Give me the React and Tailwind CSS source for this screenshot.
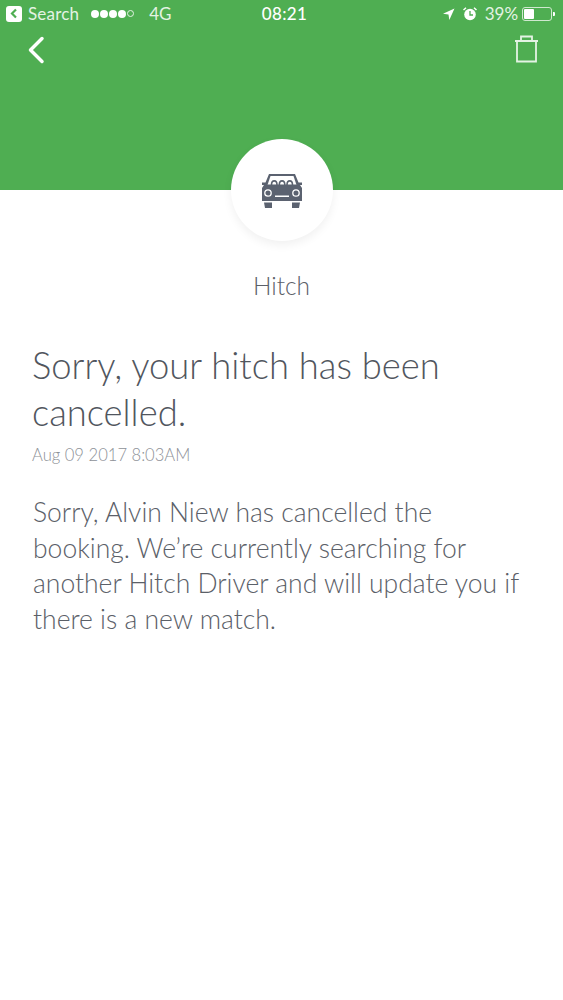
import React from 'react';

const font = { fontFamily: 'Lato, sans-serif' };

function CarIcon() {
  return (
    <svg width="40" height="34" viewBox="0 0 40 34" className="mt-[2px]">
      <path fill="#5b6270" d="M7 0h26l3.500 8.500H40v2.500h-2l2 3v13H0V14l2-3H0V8.500h3.500z" />
      <path fill="#fff" d="M8.500 2h23l3 9h-29z" />
      <path fill="none" stroke="#5b6270" strokeWidth="1.600" d="M9.500 11c0-5.500 5.500-5.500 5.500 0M17.300 11c0-5.500 5.500-5.500 5.500 0M25 11c0-5.500 5.500-5.500 5.500 0" />
      <rect x="5" y="10.500" width="30" height="2" fill="#5b6270" />
      <circle cx="6" cy="19" r="3.200" fill="none" stroke="#fff" strokeWidth="1.300" />
      <circle cx="34" cy="19" r="3.200" fill="none" stroke="#fff" strokeWidth="1.300" />
      <rect x="13" y="21.500" width="14" height="1.500" fill="#fff" />
      <path fill="#5b6270" d="M2 28.500h8V34H3zM30 28.500h8l-1 5.500h-7z" />
    </svg>
  );
}

function StatusBar() {
  return (
    <div className="flex items-center h-[27px] pl-[6px] pr-[8px] text-[#e4f3e4] text-[17px]" style={font}>
      <div className="flex flex-1 items-center">
        <span className="flex items-center justify-center w-[16px] h-[16px] bg-white rounded-[3px]">
          <svg width="10" height="11" viewBox="0 0 10 11">
            <path d="M7 1.500 3 5.500l4 4" fill="none" stroke="#4fae52" strokeWidth="2.200" />
          </svg>
        </span>
        <span className="ml-[6px] tracking-[0.2px]">Search</span>
        <span className="flex items-center gap-[1px] ml-[12px]">
          <i className="w-[8px] h-[8px] rounded-full bg-white" />
          <i className="w-[8px] h-[8px] rounded-full bg-white" />
          <i className="w-[8px] h-[8px] rounded-full bg-white" />
          <i className="w-[8px] h-[8px] rounded-full bg-white" />
          <i className="w-[7px] h-[7px] rounded-full border border-[#e4f3e4]" />
        </span>
        <span className="ml-[15px]">4G</span>
      </div>
      <span className="ml-[8px] font-medium text-white tracking-[0.4px]">08:21</span>
      <div className="flex flex-1 items-center justify-end">
        <svg width="12" height="12" viewBox="0 0 12 12" className="mr-[8px]">
          <path d="M11.500.5 0 5.800l5.500.7.800 5.500z" fill="#fff" />
        </svg>
        <svg width="14" height="14" viewBox="0 0 14 14" className="mr-[8px]">
          <circle cx="7" cy="7.500" r="5.800" fill="#fff" />
          <path d="M7 4v4h3" fill="none" stroke="#4fae52" strokeWidth="1.300" />
          <path d="M.5 3 3 .8M13.500 3 11 .8" stroke="#fff" strokeWidth="1.500" />
        </svg>
        <span>39%</span>
        <span className="flex items-center ml-[4px]">
          <span className="block w-[30px] h-[14px] border border-[#cfe8cf] rounded-[3px] p-[1px]">
            <span className="block w-[10px] h-full bg-white rounded-[1px]" />
          </span>
          <span className="w-[2px] h-[4px] ml-[1px] bg-white rounded-r-[1px]" />
        </span>
      </div>
    </div>
  );
}

export default function App() {
  return (
    <div className="min-h-[1000px] bg-white" style={font}>
      {/* Green header */}
      <div className="h-[190px] bg-[#4fae52]">
        <StatusBar />
        <div className="flex items-start justify-between pl-[27px] pr-[25px] pt-[9px]">
          <svg width="18" height="28" viewBox="0 0 18 28">
            <path d="M15 2.500 3.500 14 15 25.500" fill="none" stroke="#fff" strokeWidth="3.500" strokeLinecap="round" strokeLinejoin="round" />
          </svg>
          <svg width="24" height="28" viewBox="0 0 24 28" className="-mt-[1px]">
            <path d="M1 6h23M7 5.500V1.500h11v4M3 6.500v20h19v-20" fill="none" stroke="#e4f3e4" strokeWidth="1.800" />
          </svg>
        </div>
      </div>

      {/* Category badge */}
      <div className="flex flex-col items-center -mt-[51px]">
        <div className="flex items-center justify-center w-[102px] h-[102px] rounded-full bg-white shadow-[0_4px_10px_rgba(0,0,0,0.06)]">
          <CarIcon />
        </div>
        <p className="mt-[29px] text-[24.500px] leading-[32px] font-light text-[#5b6068]">Hitch</p>
      </div>

      {/* Message */}
      <div className="pl-[32px] pr-[40px] mt-[40px]">
        <h1 className="text-[36.400px] leading-[46.500px] font-light text-[#51565e]">
          Sorry, your hitch has been cancelled.
        </h1>
        <p className="mt-[8px] text-[16.600px] leading-[24px] font-light text-[#8d9197]">Aug 09 2017 8:03AM</p>
        <p className="mt-[28px] ml-[1px] text-[26.500px] leading-[35.500px] font-light text-[#5b6068]">
          Sorry, Alvin Niew has cancelled the booking. We’re currently searching for another Hitch Driver and will update you if there is a new match.
        </p>
      </div>
    </div>
  );
}
